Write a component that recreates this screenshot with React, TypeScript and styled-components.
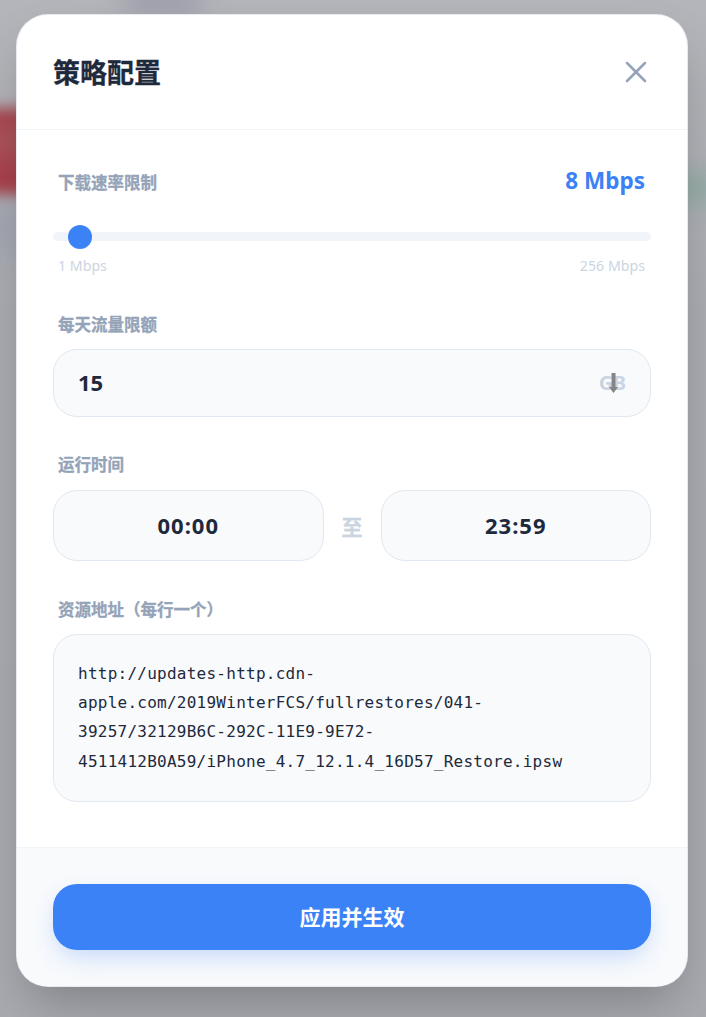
import React from "react";
import styled, { createGlobalStyle } from "styled-components";
import { X } from "lucide-react";

const FONT = `"Noto Sans", "Noto Sans CJK SC", sans-serif`;

const GlobalStyle = createGlobalStyle`
  html, body {
    margin: 0;
    padding: 0;
    height: 100%;
    overflow: hidden;
    background: #aaacb2;
    font-family: ${FONT};
  }
`;

const App = () => {
  return (
    <Screen>
      <GlobalStyle />
      <Backdrop>
        <RedBlob />
        <SlateBlob />
        <GreenBlob />
        <TopBlob />
      </Backdrop>
      <Modal>
        <Header>
          <Title>策略配置</Title>
          <CloseButton>
            <X size={36} strokeWidth={1.7} />
          </CloseButton>
        </Header>
        <Body>
          <SpeedRow>
            <SpeedLabel>下载速率限制</SpeedLabel>
            <SpeedValue>8 Mbps</SpeedValue>
          </SpeedRow>
          <Track>
            <Thumb />
          </Track>
          <RangeRow>
            <span>1 Mbps</span>
            <span>256 Mbps</span>
          </RangeRow>

          <QuotaLabel>每天流量限额</QuotaLabel>
          <QuotaBox>
            <QuotaValue>15</QuotaValue>
            <Unit>
              GB
              <DownloadBadge>
                <svg width="24" height="30" viewBox="0 0 24 30">
                  <path d="M9.500 5h4v14h2.500l-4.500 6-4.500-6h2.500z" fill="#858585" />
                </svg>
              </DownloadBadge>
            </Unit>
          </QuotaBox>

          <TimeLabel>运行时间</TimeLabel>
          <TimeRow>
            <TimeBox>00:00</TimeBox>
            <To>至</To>
            <TimeBox>23:59</TimeBox>
          </TimeRow>

          <UrlLabel>资源地址（每行一个）</UrlLabel>
          <UrlBox>
            http://updates-http.cdn-
            <br />
            apple.com/2019WinterFCS/fullrestores/041-
            <br />
            39257/32129B6C-292C-11E9-9E72-
            <br />
            4511412B0A59/iPhone_4.7_12.1.4_16D57_Restore.ipsw
          </UrlBox>
        </Body>
        <Footer>
          <ApplyButton>应用并生效</ApplyButton>
        </Footer>
      </Modal>
    </Screen>
  );
};

const Screen = styled.div`
  position: relative;
  width: 706px;
  height: 1017px;
  overflow: hidden;
  padding: 14px 18px 0 16px;
  box-sizing: border-box;
  background: linear-gradient(180deg, #b4b5ba 0%, #aaacb2 30%, #a8aab0 100%);
`;

const Backdrop = styled.div`
  position: absolute;
  inset: 0;
  overflow: hidden;
`;

const RedBlob = styled.div`
  position: absolute;
  left: -60px;
  top: 108px;
  width: 112px;
  height: 88px;
  background: linear-gradient(180deg, #a8424c 0%, #ac545c 38%, #a8424c 70%);
  filter: blur(7px);
`;

const SlateBlob = styled.div`
  position: absolute;
  left: -30px;
  top: 205px;
  width: 60px;
  height: 50px;
  background: #a3a7b1;
  filter: blur(12px);
`;

const GreenBlob = styled.div`
  position: absolute;
  right: -20px;
  top: 170px;
  width: 60px;
  height: 36px;
  background: #98aca8;
  filter: blur(10px);
`;

const TopBlob = styled.div`
  position: absolute;
  left: 125px;
  top: -12px;
  width: 75px;
  height: 26px;
  background: #9a9caa;
  filter: blur(12px);
`;

const Modal = styled.div`
  position: relative;
  width: 672px;
  height: 973px;
  box-sizing: border-box;
  display: flex;
  flex-direction: column;
  background: #ffffff;
  border: 1px solid rgba(226, 232, 240, 0.85);
  border-radius: 32px;
  overflow: hidden;
  box-shadow: 0 25px 50px -12px rgba(0, 0, 0, 0.25);
`;

const Header = styled.div`
  height: 115px;
  flex: none;
  box-sizing: border-box;
  padding: 0 33px 0 36px;
  display: flex;
  align-items: center;
  justify-content: space-between;
  border-bottom: 1px solid #f1f5f9;
`;

const Title = styled.div`
  font-size: 27px;
  font-weight: 700;
  color: #1e293b;
  line-height: 40px;
  -webkit-text-stroke: 0.3px #1e293b;
  padding-top: 2px;
`;

const CloseButton = styled.div`
  display: flex;
  color: #94a3b8;
`;

const Body = styled.div`
  flex: 1;
  padding: 0 36px;
`;

const Label = styled.div`
  font-size: 16.500px;
  font-weight: 700;
  line-height: 22px;
  color: #94a3b8;
  padding-left: 5px;
  -webkit-text-stroke: 0.3px #94a3b8;
`;

const SpeedRow = styled.div`
  display: flex;
  justify-content: space-between;
  align-items: center;
  padding: 35px 6px 0 0;
  height: 32px;
`;

const SpeedLabel = styled(Label)`
  padding-top: 4px;
`;

const SpeedValue = styled.div`
  font-size: 22.500px;
  font-weight: 700;
  color: #3b82f6;
  padding-bottom: 2px;
`;

const Track = styled.div`
  position: relative;
  margin-top: 35px;
  height: 9px;
  border-radius: 5px;
  background: #f1f5f9;
`;

const Thumb = styled.div`
  position: absolute;
  left: 15px;
  top: -7px;
  width: 24px;
  height: 24px;
  border-radius: 50%;
  background: #3b82f6;
`;

const RangeRow = styled.div`
  display: flex;
  justify-content: space-between;
  padding: 0 6px 0 5px;
  margin-top: 15px;
  font-size: 14.200px;
  line-height: 20px;
  color: #cbd5e1;
`;

const QuotaLabel = styled(Label)`
  margin-top: 38px;
`;

const QuotaBox = styled.div`
  margin-top: 13px;
  height: 68px;
  box-sizing: border-box;
  border: 1px solid #e2e8f0;
  border-radius: 24px;
  background: #f8fafc;
  display: flex;
  align-items: center;
  justify-content: space-between;
  padding: 0 24px;
`;

const QuotaValue = styled.div`
  font-size: 22px;
  font-weight: 700;
  color: #1e293b;
  padding-bottom: 2px;
`;

const Unit = styled.div`
  position: relative;
  font-size: 19.500px;
  line-height: 26px;
  font-weight: 700;
  color: #c3cede;
`;

const DownloadBadge = styled.div`
  position: absolute;
  left: 3px;
  top: -2px;
  display: flex;
  background: rgba(255, 255, 255, 0.12);
`;

const TimeLabel = styled(Label)`
  margin-top: 37px;
`;

const TimeRow = styled.div`
  margin-top: 14px;
  display: flex;
  align-items: center;
`;

const TimeBox = styled.div`
  flex: 1;
  height: 71px;
  box-sizing: border-box;
  border: 1px solid #e2e8f0;
  border-radius: 24px;
  background: #f8fafc;
  display: flex;
  align-items: center;
  justify-content: center;
  padding-bottom: 2px;
  font-size: 22px;
  font-weight: 700;
  letter-spacing: 1px;
  color: #1e293b;
`;

const To = styled.div`
  width: 57px;
  text-align: center;
  font-size: 21px;
  font-weight: 700;
  color: #cbd5e1;
  -webkit-text-stroke: 0.3px #cbd5e1;
`;

const UrlLabel = styled(Label)`
  margin-top: 38px;
`;

const UrlBox = styled.div`
  margin-top: 13px;
  height: 168px;
  box-sizing: border-box;
  border: 1px solid #e2e8f0;
  border-radius: 24px;
  background: #f8fafc;
  padding: 23.500px 24px;
  font-family: "DejaVu Sans Mono", monospace;
  font-size: 16px;
  letter-spacing: 0.25px;
  line-height: 29.400px;
  color: #1e293b;
  white-space: nowrap;
`;

const Footer = styled.div`
  flex: none;
  height: 139px;
  box-sizing: border-box;
  padding: 36px 36px 0;
  background: #f8fafc;
  border-top: 1px solid #f1f5f9;
`;

const ApplyButton = styled.div`
  height: 66px;
  border-radius: 24px;
  background: #3b82f6;
  color: #ffffff;
  font-size: 21px;
  font-weight: 700;
  display: flex;
  align-items: center;
  justify-content: center;
  padding-bottom: 2px;
  box-sizing: border-box;
  box-shadow: 0 10px 25px -5px rgba(59, 130, 246, 0.3);
`;

export default App;
